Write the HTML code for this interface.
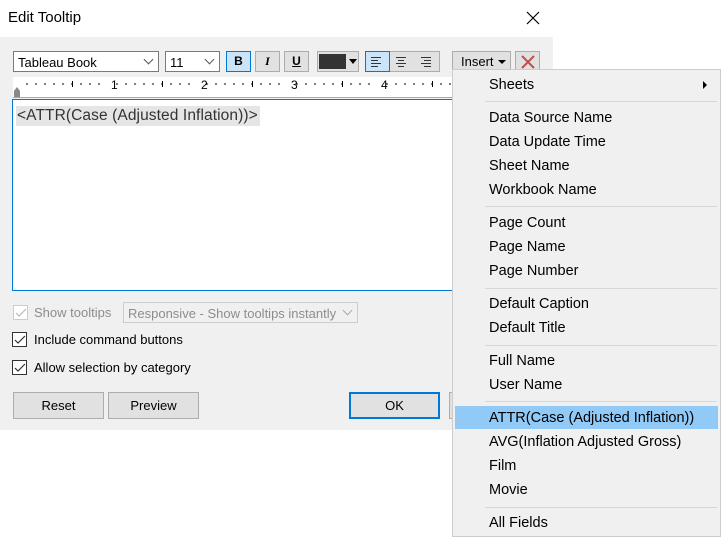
<!DOCTYPE html>
<html><head><style>
*{box-sizing:border-box;margin:0;padding:0}
body{width:721px;height:537px;background:#fff;position:relative;overflow:hidden;font-family:"Liberation Sans",sans-serif;font-size:13px;color:#000}
.a{position:absolute}
.dlg{left:0;top:37px;width:553px;height:393px;background:#f0f0f0}
.box{position:absolute;border:1px solid #adadad;background:#e1e1e1}
.sel{position:absolute;border:1px solid #7a7a7a;background:#fff;font-size:13px;padding:3px 0 0 4px}
.chev{position:absolute;right:6px;top:4px;width:7px;height:7px;border-right:1px solid #555;border-bottom:1px solid #555;transform:rotate(45deg)}
.t{position:absolute;white-space:nowrap}
.menu{left:452px;top:69px;width:269px;height:468px;background:#f0f0f0;border:1px solid #ccc}
.mi{position:absolute;left:36px;font-size:14.5px;color:#000;white-space:nowrap}
.sep{position:absolute;left:32px;right:3px;height:1px;background:#d7d7d7}
.cb{position:absolute;width:15px;height:15px;border:1px solid #333;background:#fff}
.btn{position:absolute;height:27px;border:1px solid #adadad;background:#e1e1e1;text-align:center;line-height:25px;font-size:13px}
</style></head><body>
<div class="t" style="left:8px;top:9px;font-size:15px">Edit Tooltip</div>
<svg class="a" style="left:526px;top:11px" width="14" height="14"><path d="M1 1L13 13M13 1L1 13" stroke="#000" stroke-width="1.2"/></svg>
<div class="a dlg"></div>
<div class="sel" style="left:13px;top:51px;width:146px;height:21px">Tableau Book<div class="chev"></div></div>
<div class="sel" style="left:165px;top:51px;width:55px;height:21px">11<div class="chev"></div></div>
<div class="box" style="left:226px;top:51px;width:25px;height:21px;background:#cce4f7;border-color:#0078d7;text-align:center;font-weight:bold;font-size:12px;line-height:19px">B</div>
<div class="box" style="left:255px;top:51px;width:25px;height:21px;text-align:center;font-style:italic;font-weight:bold;font-size:12px;line-height:19px;font-family:'Liberation Serif',serif">I</div>
<div class="box" style="left:284px;top:51px;width:25px;height:21px;text-align:center;font-weight:bold;font-size:12px;line-height:19px;text-decoration:underline">U</div>
<div class="box" style="left:317px;top:51px;width:42px;height:21px"><div class="a" style="left:1px;top:2px;width:27px;height:15px;background:#333"></div><div class="a" style="left:31px;top:7px;border:4px solid transparent;border-top:5px solid #000"></div></div>
<div class="box" style="left:365px;top:51px;width:75px;height:21px"></div>
<div class="box" style="left:365px;top:51px;width:25px;height:21px;background:#cce4f7;border-color:#0078d7"></div>
<svg class="a" style="left:370px;top:55px" width="70" height="13"><g stroke="#333" stroke-width="1"><path d="M1 2.5h10M1 5.5h7M1 8.5h10M1 11.5h7"/><path d="M26 2.5h10M28 5.5h6M26 8.5h10M28 11.5h6"/><path d="M51 2.5h10M54 5.5h7M51 8.5h10M54 11.5h7"/></g></svg>
<div class="box" style="left:452px;top:51px;width:59px;height:21px;font-size:13px;padding:2px 0 0 8px">Insert<span class="a" style="left:45px;top:8px;border:4px solid transparent;border-top:4px solid #000"></span></div>
<div class="box" style="left:515px;top:51px;width:25px;height:21px"><svg class="a" style="left:5px;top:3px" width="14" height="14"><path d="M1 1L13 13M13 1L1 13" stroke="#c0504d" stroke-width="2"/></svg></div>
<div class="a" style="left:13px;top:77px;width:440px;height:21px;background:#fff;border-bottom:1px solid #aaa"></div>
<svg class="a" style="left:13px;top:77px" width="440" height="22"><g stroke="#000"><path d="M14 6v2M23 6v2M32 6v2M41 6v2M50 6v2M59 6v2M68 6v2M77 6v2M86 6v2M104 6v2M113 6v2M122 6v2M131 6v2M140 6v2M149 6v2M158 6v2M167 6v2M176 6v2M194 6v2M203 6v2M212 6v2M221 6v2M230 6v2M239 6v2M248 6v2M257 6v2M266 6v2M284 6v2M293 6v2M302 6v2M311 6v2M320 6v2M329 6v2M338 6v2M347 6v2M356 6v2M374 6v2M383 6v2M392 6v2M401 6v2M410 6v2M419 6v2M428 6v2M437 6v2"/><path d="M59.5 4v6M149.5 4v6M239.5 4v6M329.5 4v6M419.5 4v6"/></g><g font-size="12" font-family="Liberation Sans"><text x="98" y="12">1</text><text x="188" y="12">2</text><text x="278" y="12">3</text><text x="368" y="12">4</text></g><path d="M1 20V14l3-4 3 4v6z" fill="#888"/></svg>
<div class="a" style="left:12px;top:99px;width:450px;height:192px;background:#fff;border:1px solid #0078d7"></div>
<div class="t" style="left:16px;top:106px;height:20px;width:244px;background:#e5e5e5;font-size:15.5px;color:#333;padding:1px 0 0 1px;letter-spacing:0.1px">&lt;ATTR(Case (Adjusted Inflation))&gt;</div>
<div class="cb" style="left:13px;top:305px;border-color:#ccc"></div>
<svg class="a" style="left:15px;top:308px" width="12" height="10"><path d="M1 5l3 3 7-7" stroke="#bbb" fill="none" stroke-width="1.2"/></svg>
<div class="t" style="left:34px;top:305px;color:#8d8d8d">Show tooltips</div>
<div class="a" style="left:123px;top:302px;width:235px;height:21px;border:1px solid #ccc;background:#f0f0f0"><span class="t" style="left:4px;top:3px;color:#8d8d8d">Responsive - Show tooltips instantly</span><div class="chev" style="border-color:#aaa"></div></div>
<div class="cb" style="left:12px;top:332px"></div>
<svg class="a" style="left:14px;top:335px" width="12" height="10"><path d="M1 5l3 3 7-7" stroke="#333" fill="none" stroke-width="1.2"/></svg>
<div class="t" style="left:34px;top:332px">Include command buttons</div>
<div class="cb" style="left:12px;top:360px"></div>
<svg class="a" style="left:14px;top:363px" width="12" height="10"><path d="M1 5l3 3 7-7" stroke="#333" fill="none" stroke-width="1.2"/></svg>
<div class="t" style="left:34px;top:360px">Allow selection by category</div>
<div class="btn" style="left:13px;top:392px;width:91px">Reset</div>
<div class="btn" style="left:108px;top:392px;width:91px">Preview</div>
<div class="btn" style="left:349px;top:392px;width:91px;border:2px solid #0078d7;line-height:23px">OK</div>
<div class="btn" style="left:449px;top:392px;width:20px"></div>
<div class="a menu">
<div class="mi" style="top:7px">Sheets</div>
<div class="a" style="left:250px;top:11px;border:4px solid transparent;border-left:4px solid #000;border-right:0"></div>
<div class="sep" style="top:31px"></div>
<div class="mi" style="top:40px">Data Source Name</div>
<div class="mi" style="top:64px">Data Update Time</div>
<div class="mi" style="top:88px">Sheet Name</div>
<div class="mi" style="top:112px">Workbook Name</div>
<div class="sep" style="top:136px"></div>
<div class="mi" style="top:145px">Page Count</div>
<div class="mi" style="top:169px">Page Name</div>
<div class="mi" style="top:193px">Page Number</div>
<div class="sep" style="top:218px"></div>
<div class="mi" style="top:226px">Default Caption</div>
<div class="mi" style="top:250px">Default Title</div>
<div class="sep" style="top:275px"></div>
<div class="mi" style="top:283px">Full Name</div>
<div class="mi" style="top:307px">User Name</div>
<div class="sep" style="top:331px"></div>
<div class="a" style="left:2px;top:336px;width:263px;height:23px;background:#91c9f7"></div>
<div class="mi" style="top:340px">ATTR(Case (Adjusted Inflation))</div>
<div class="mi" style="top:364px">AVG(Inflation Adjusted Gross)</div>
<div class="mi" style="top:388px">Film</div>
<div class="mi" style="top:412px">Movie</div>
<div class="sep" style="top:437px"></div>
<div class="mi" style="top:445px">All Fields</div>
</div>
</body></html>
